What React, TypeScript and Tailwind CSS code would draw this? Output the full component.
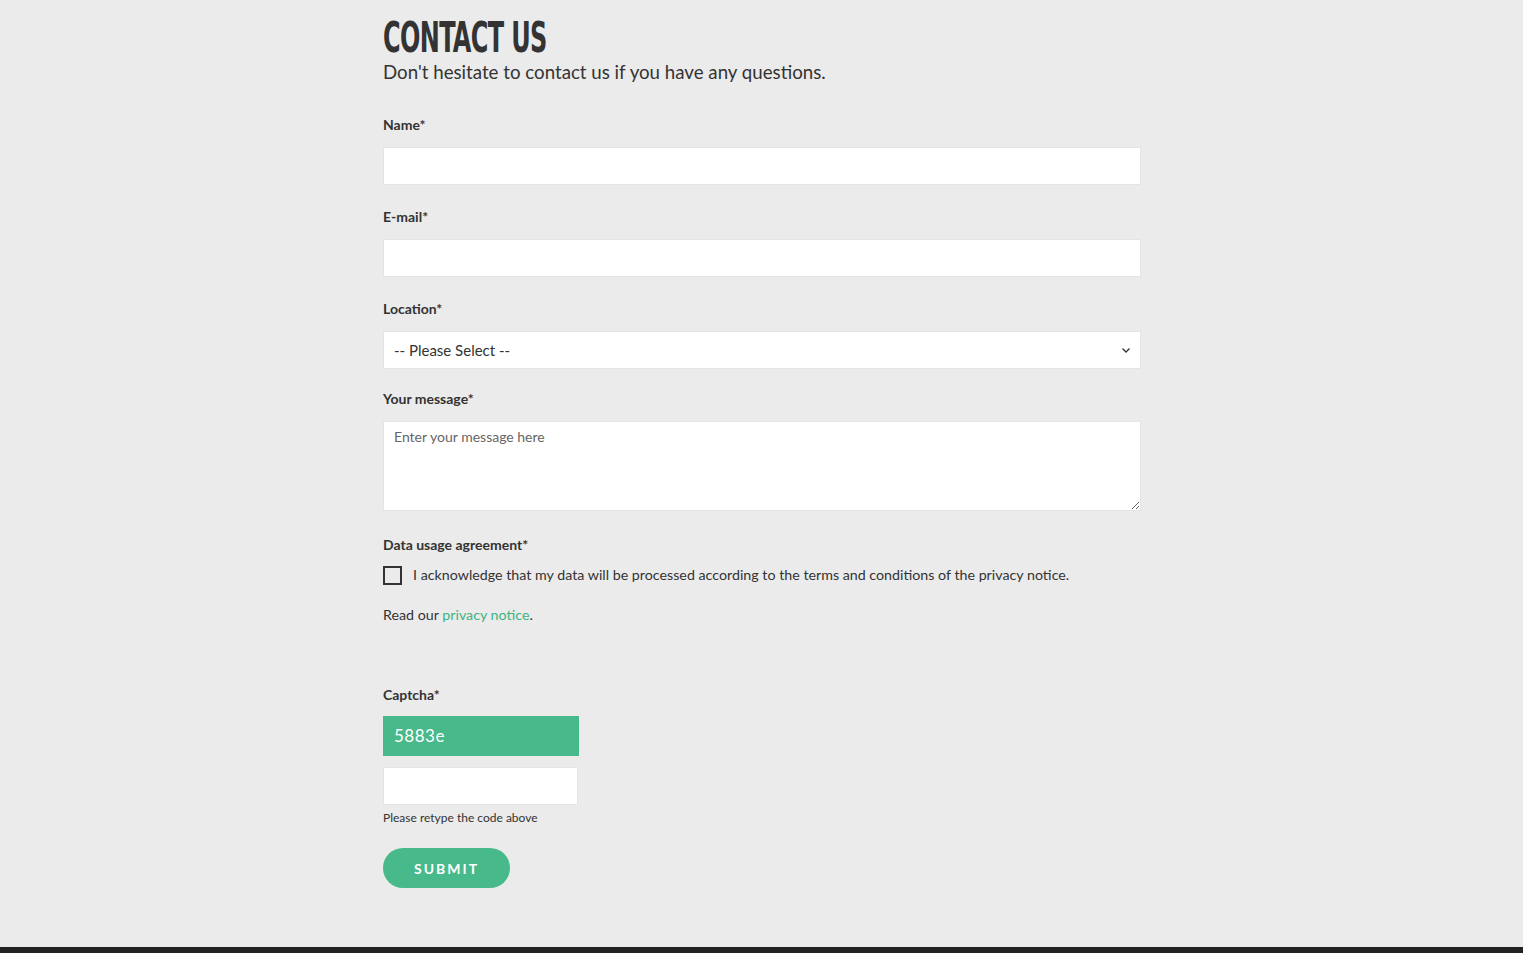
import { useState } from 'react';

// Contact form page: heading, required fields, data agreement, captcha and submit.
const labelClass = 'block text-[14px] font-bold leading-5 text-[#333]';
const inputClass =
  'block w-full h-[38px] bg-white px-[10px] text-[15px] text-[#333] outline-none border border-[#e4e4e4]';

export default function App() {
  const [agreed, setAgreed] = useState(false);

  return (
    <div className="min-h-[953px] flex flex-col bg-[#ebebeb] font-['Lato','Noto_Sans',sans-serif] text-[#333]">
      <main className="flex-1">
        <div className="ml-[383px] w-[758px] pt-[14px]">
          {/* Condensed display heading */}
          <h1 className="inline-block origin-left scale-x-[0.62] whitespace-nowrap font-['Liberation_Sans_Narrow','DejaVu_Sans_Condensed',sans-serif] text-[43px] font-bold leading-[46px] tracking-[-1px] text-[#333]">
            CONTACT US
          </h1>
          <p className="text-[18.7px] leading-6 text-[#333]">
            Don't hesitate to contact us if you have any questions.
          </p>

          <form className="mt-[31px]" onSubmit={(e) => e.preventDefault()}>
            <label htmlFor="name" className={labelClass}>
              Name*
            </label>
            <input id="name" type="text" className={`${inputClass} mt-[12px]`} />

            <label htmlFor="email" className={`${labelClass} mt-[22px]`}>
              E-mail*
            </label>
            <input id="email" type="email" className={`${inputClass} mt-[12px]`} />

            <label htmlFor="location" className={`${labelClass} mt-[22px]`}>
              Location*
            </label>
            <div className="relative mt-[12px]">
              <select
                id="location"
                className={`${inputClass} appearance-none text-[14px]`}
                defaultValue=""
              >
                <option value="">-- Please Select --</option>
              </select>
              {/* chevron over the select */}
              <svg
                className="pointer-events-none absolute right-[10px] top-[14px] h-[10px] w-[10px] text-[#333]"
                viewBox="0 0 10 10"
                fill="none"
                stroke="currentColor"
                strokeWidth="1.3"
              >
                <path d="M1.5 3.5 5 7l3.5-3.5" />
              </svg>
            </div>

            <label htmlFor="message" className={`${labelClass} mt-[20px]`}>
              Your message*
            </label>
            <textarea
              id="message"
              placeholder="Enter your message here"
              className="mt-[12px] block h-[90px] w-full resize-y border border-[#e4e4e4] bg-white px-[10px] py-[4px] text-[14px] text-[#333] outline-none placeholder:text-[#666]"
            />

            <p className={`${labelClass} mt-[24px]`}>Data usage agreement*</p>
            <label className="mt-[10px] flex items-center gap-[11px] text-[14.25px] leading-5">
              <input
                type="checkbox"
                checked={agreed}
                onChange={(e) => setAgreed(e.target.checked)}
                className="peer sr-only"
              />
              <span className="h-[19px] w-[19px] shrink-0 border-2 border-[#333] bg-transparent" />
              <span>
                I acknowledge that my data will be processed according to the terms and conditions of the
                privacy notice.
              </span>
            </label>

            <p className="mt-[20px] text-[14.25px] leading-5">
              Read our{' '}
              <a href="#" className="text-[#3db383]">
                privacy notice
              </a>
              .
            </p>

            <label htmlFor="captcha" className={`${labelClass} mt-[60px]`}>
              Captcha*
            </label>
            <div className="mt-[11px] flex h-[40px] w-[196px] items-center bg-[#48b98a] px-[11px] text-[17px] tracking-[0.5px] text-white">
              5883e
            </div>
            <input
              id="captcha"
              type="text"
              className="mt-[11px] block h-[38px] w-[195px] border border-[#e4e4e4] bg-white px-[10px] text-[15px] outline-none"
            />
            <p className="mt-[5px] text-[12px] leading-4">Please retype the code above</p>

            <button
              type="submit"
              className="mt-[22px] h-[40px] w-[127px] rounded-full bg-[#48b98a] text-[14px] font-bold tracking-[2px] text-white"
            >
              SUBMIT
            </button>
          </form>
        </div>
      </main>
      <footer className="h-[6px] bg-[#222]" />
    </div>
  );
}
